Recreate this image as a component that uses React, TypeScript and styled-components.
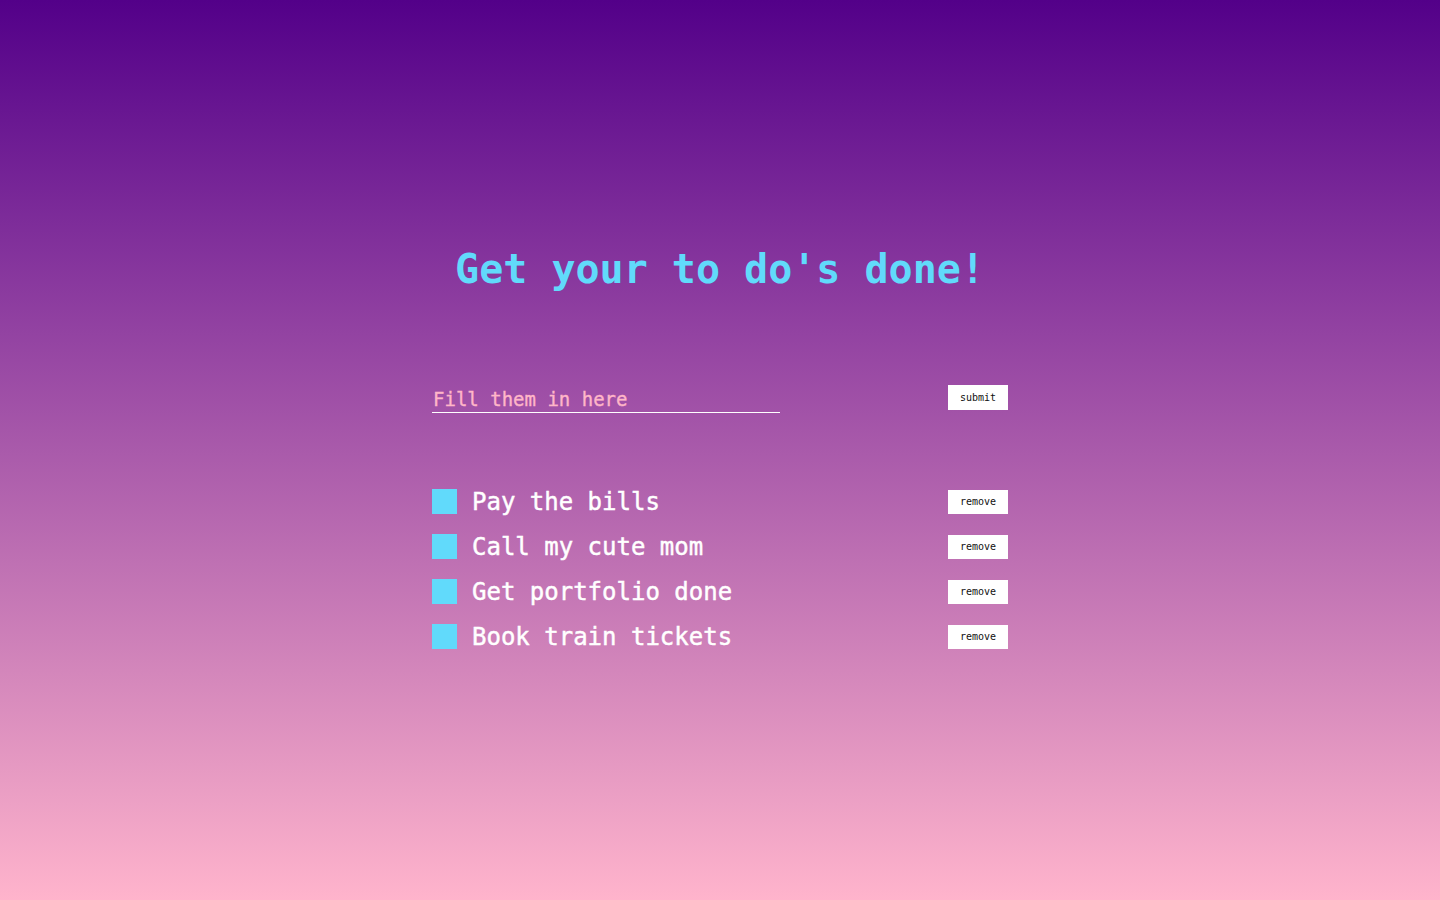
import React, { useState } from "react";
import styled, { createGlobalStyle } from "styled-components";

const GlobalStyle = createGlobalStyle`
  html, body {
    margin: 0;
    padding: 0;
  }
  body {
    min-height: 100vh;
    background: linear-gradient(to bottom, #530089 0%, #ffb4cc 100%);
    background-attachment: fixed;
    font-family: "DejaVu Sans Mono", "Liberation Mono", monospace;
  }
`;

const Page = styled.main`
  min-height: 100vh;
  display: flex;
  flex-direction: column;
  align-items: center;
`;

const Container = styled.section`
  width: 576px;
  padding-top: 245px;
  display: flex;
  flex-direction: column;
`;

const Title = styled.h1`
  margin: 0;
  text-align: center;
  color: #61dafb;
  font-family: "DejaVu Sans Mono", monospace;
  font-weight: bold;
  font-size: 40px;
  line-height: 48px;
`;

const Form = styled.form`
  margin-top: 92px;
  display: flex;
  justify-content: space-between;
  align-items: flex-start;
`;

const TextInput = styled.input`
  width: 348px;
  height: 28px;
  box-sizing: border-box;
  padding: 0 0 0 1px;
  border: none;
  border-bottom: 1px solid #ffffff;
  background: transparent;
  outline: none;
  color: #ffffff;
  font-family: "DejaVu Sans Mono", monospace;
  font-size: 19px;

  &::placeholder {
    color: #ffb6c8;
    opacity: 1;
    -webkit-text-stroke: 0.35px #ffb6c8;
  }
`;

const SmallButton = styled.button<{ $h?: number }>`
  width: 60px;
  height: ${(p) => p.$h ?? 25}px;
  box-sizing: border-box;
  padding: 0;
  border: none;
  background: #ffffff;
  color: #111111;
  font-family: "DejaVu Sans Mono", monospace;
  font-size: 10px;
  cursor: pointer;
`;

const List = styled.ul`
  margin: 76px 0 0;
  padding: 0;
  list-style: none;
  display: flex;
  flex-direction: column;
  gap: 20px;
`;

const Row = styled.li`
  height: 25px;
  display: flex;
  align-items: center;
  justify-content: space-between;
`;

const Left = styled.label`
  display: flex;
  align-items: center;
  gap: 15px;
`;

const Box = styled.input`
  appearance: none;
  margin: 0;
  width: 25px;
  height: 25px;
  background: #61dafb;
  border: none;
  cursor: pointer;
`;

const ItemText = styled.span`
  color: #ffffff;
  font-family: "DejaVu Sans Mono", monospace;
  font-size: 24px;
  line-height: 25px;
  padding-top: 2px;
  -webkit-text-stroke: 0.45px #ffffff;
`;

const initial = [
  "Pay the bills",
  "Call my cute mom",
  "Get portfolio done",
  "Book train tickets",
];

export default function App() {
  const [items, setItems] = useState<string[]>(initial);
  const [value, setValue] = useState("");

  return (
    <>
      <GlobalStyle />
      <Page>
        <Container>
          <Title>Get your to do's done!</Title>
          <Form
            onSubmit={(e) => {
              e.preventDefault();
              if (value.trim()) {
                setItems([...items, value.trim()]);
                setValue("");
              }
            }}
          >
            <TextInput
              placeholder="Fill them in here"
              value={value}
              onChange={(e) => setValue(e.target.value)}
            />
            <SmallButton type="submit">submit</SmallButton>
          </Form>
          <List>
            {items.map((item, i) => (
              <Row key={item + i}>
                <Left>
                  <Box type="checkbox" />
                  <ItemText>{item}</ItemText>
                </Left>
                <SmallButton
                  $h={24}
                  type="button"
                  onClick={() => setItems(items.filter((_, j) => j !== i))}
                >
                  remove
                </SmallButton>
              </Row>
            ))}
          </List>
        </Container>
      </Page>
    </>
  );
}
